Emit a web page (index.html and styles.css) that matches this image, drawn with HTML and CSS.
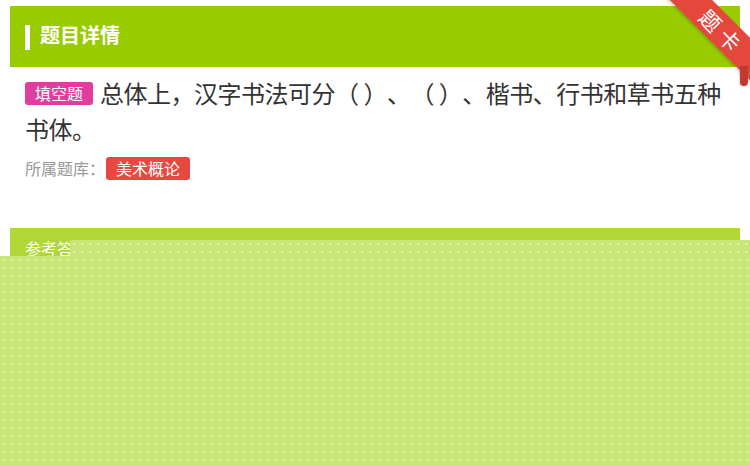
FILE: index.html
```html
<!DOCTYPE html>
<html lang="zh">
<head>
<meta charset="utf-8">
<link rel="stylesheet" href="styles.css">
</head>
<body>
<div class="page">
  <div class="card">
    <div class="head"><span class="bar"></span><span class="head-title">题目详情</span></div>
    <div class="body">
      <div class="question"><span class="tag-type">填空题</span>总体上，汉字书法可分（ ）、（ ）、楷书、行书和草书五种书体。</div>
      <div class="bank"><span class="bank-label">所属题库：</span><span class="tag-bank">美术概论</span></div>
    </div>
    <div class="head2"><span class="head2-title">参考答案</span></div>
  </div>
  <div class="ribbon-wrap"><div class="ribbon"><span class="ribbon-text">题</span><span class="ribbon-text">卡</span></div><div class="fold"></div></div>
  <div class="mask-top"></div>
  <div class="mask"></div>
</div>
</body>
</html>
```
FILE: styles.css
```css
html, body { margin: 0; padding: 0; background: #fff; }
body { font-family: "Noto Sans CJK SC", "Noto Sans", sans-serif; width: 750px; height: 466px; overflow: hidden; text-spacing-trim: space-all; }
.page { position: relative; width: 750px; height: 466px; padding-top: 6px; box-sizing: border-box; }
.card { margin: 0 10px; background: #fff; }
.head { background: #99cc00; height: 61px; display: flex; align-items: center; padding-left: 15px; }
.bar { width: 5px; height: 25px; background: #fff; margin-right: 10px; margin-top: 1px; }
.head-title { color: #fff; font-size: 20px; font-weight: bold; line-height: 1; margin-top: -4px; }
.body { padding: 8px 15px 0 15px; height: 148px; box-sizing: border-box; }
.question { font-size: 24px; line-height: 36px; color: #333; letter-spacing: -0.5px; }
.tag-type { display: inline-block; background: #e23d9e; color: #fff; font-size: 16px; line-height: 23px; padding: 0 10px; border-radius: 3px; margin-right: 7px; vertical-align: 3px; letter-spacing: 0; }
.bank { margin-top: 9px; display: flex; align-items: center; }
.bank-label { color: #999; font-size: 16px; line-height: 24px; }
.tag-bank { display: inline-block; background: #e5493f; color: #fff; font-size: 16px; line-height: 23px; padding: 0 10px; border-radius: 3px; margin-left: 1px; }
.head2 { margin-top: 13px; background: #b0d736; height: 40px; padding-left: 15px; }
.head2-title { color: #fff; font-size: 16px; line-height: 40px; }
.ribbon-wrap { position: absolute; top: 0; right: 0; width: 100px; height: 95px; overflow: hidden; }
.ribbon { position: absolute; left: 5px; top: 14px; width: 130px; height: 30px; background: #e4483d; transform: rotate(45deg); box-shadow: 0 2px 3px rgba(0,0,0,0.18); display: flex; justify-content: center; align-items: center; gap: 6px; padding-left: 2px; box-sizing: border-box; }
.ribbon-text { color: #fff; font-size: 21px; line-height: 30px; }
.fold { position: absolute; right: 2px; top: 66px; width: 8px; height: 20px; background: #c2392f; border-radius: 0 0 4px 4px; box-shadow: -1px 1px 2px rgba(0,0,0,0.15); }
.mask-top { position: absolute; left: 70px; right: 0; top: 240px; height: 16px; background-color: #c9e479; background-image: radial-gradient(circle, rgba(230,245,170,0.9) 0.7px, transparent 1px); background-size: 8px 8px; }
.mask { position: absolute; left: 0; right: 0; top: 256px; bottom: 0; background-color: #c9e479; background-image: radial-gradient(circle, rgba(230,245,170,0.9) 0.7px, transparent 1px); background-size: 8px 8px; }
```
